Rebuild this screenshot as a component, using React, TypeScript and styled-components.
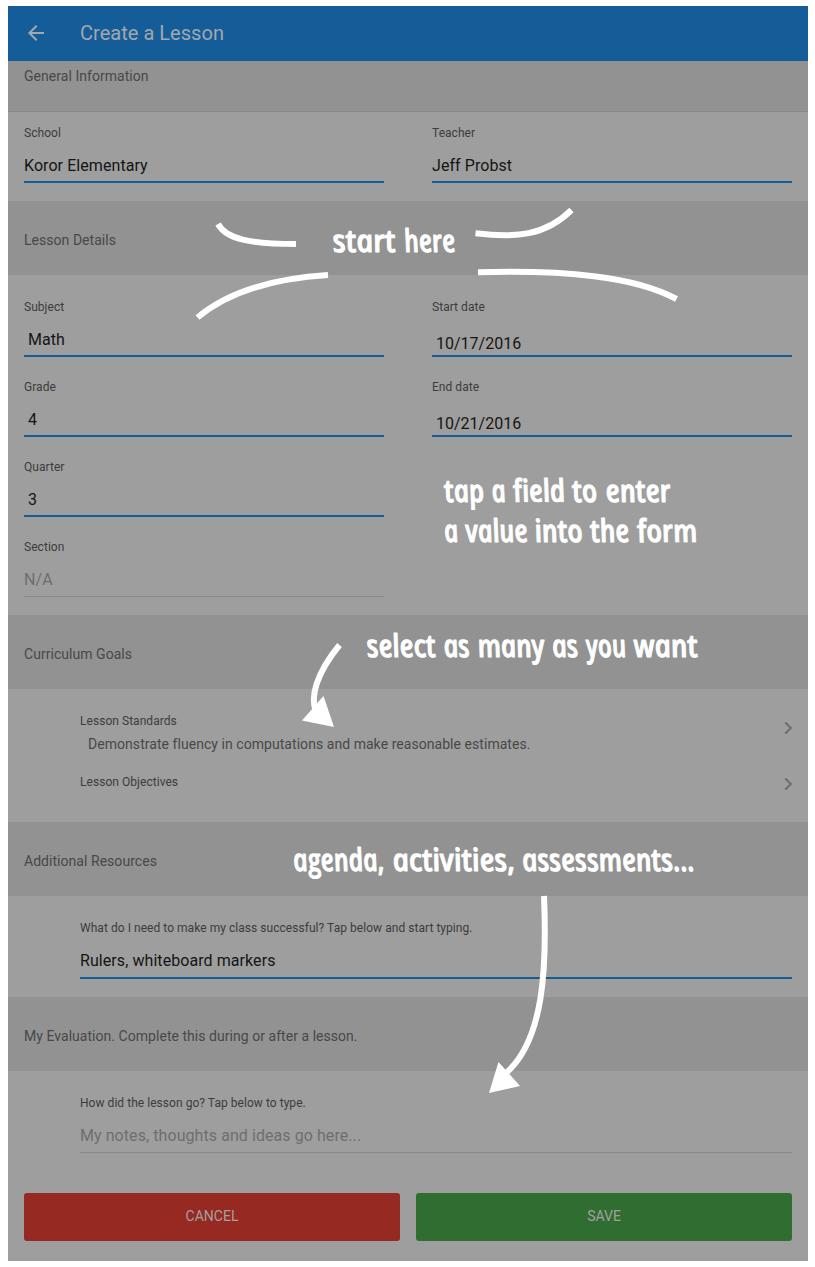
import React from "react";
import styled, { createGlobalStyle } from "styled-components";

const GlobalStyle = createGlobalStyle`
  * { box-sizing: border-box; }
  body { margin: 0; background: #fff; font-family: Roboto, "Liberation Sans", sans-serif; }
`;

const Page = styled.main`
  position: relative;
  width: 800px;
  height: 1255px;
  margin: 6px 0 6px 8px;
  background: #9e9e9e;
  overflow: hidden;
`;

const Toolbar = styled.header`
  display: flex;
  align-items: center;
  height: 55px;
  padding: 0 16px 1px;
  gap: 32px;
  background: #155d98;
  color: #a2a8ad;
`;

const Title = styled.h1`
  margin: 0;
  font-size: 20px;
  font-weight: 400;
  line-height: 24px;
  letter-spacing: 0.03px;
`;

const SectionBar = styled.h2<{ $first?: boolean }>`
  display: flex;
  align-items: center;
  height: ${(p) => (p.$first ? 51 : 74)}px;
  margin: 0;
  padding: ${(p) => (p.$first ? "0 16px 20px" : "4px 16px 0")};
  border-bottom: ${(p) => (p.$first ? "1px solid #8a8a8a" : "0")};
  background: #929292;
  color: #484848;
  font-size: 14px;
  font-weight: 400;
  letter-spacing: 0.04px;
`;

const Panel = styled.section<{ $height: number; $top: number; $inset?: boolean }>`
  height: ${(p) => p.$height}px;
  padding: ${(p) => p.$top}px 16px 0 ${(p) => (p.$inset ? 72 : 16)}px;
`;

const Columns = styled.div`
  display: grid;
  grid-template-columns: 1fr 1fr;
  column-gap: 48px;
`;

const FieldBox = styled.label`
  display: block;
  height: 80px;
`;

const FieldLabel = styled.span`
  display: block;
  height: 16px;
  font-size: 12px;
  line-height: 16px;
  letter-spacing: 0.045px;
  color: #3c3c3c;
`;

const FieldValue = styled.span<{ $empty?: boolean; $indent?: boolean; $drop?: boolean; $tall?: boolean }>`
  display: block;
  height: ${(p) => (p.$tall ? 43 : 42)}px;
  padding: ${(p) => (p.$drop ? 19 : 15)}px 0 0 ${(p) => (p.$indent ? 4 : 0)}px;
  border-bottom: ${(p) => (p.$empty ? "1px solid #898989" : "2px solid #155d98")};
  font-size: 16px;
  line-height: 20px;
  letter-spacing: ${(p) => (p.$indent ? 0 : 0.07)}px;
  color: ${(p) => (p.$empty ? "#6e6e6e" : "#151515")};
`;

const GoalRow = styled.div<{ $height: number }>`
  display: flex;
  justify-content: space-between;
  align-items: flex-start;
  height: ${(p) => p.$height}px;
`;

const GoalText = styled.p`
  margin: 5px 0 0 8px;
  font-size: 14px;
  line-height: 20px;
  letter-spacing: 0.05px;
  color: #484848;
`;

const Chevron = styled.svg<{ $offset: number }>`
  display: block;
  width: 8px;
  height: 14px;
  margin-top: ${(p) => p.$offset}px;
`;

const Actions = styled.footer`
  display: grid;
  grid-template-columns: 1fr 1fr;
  gap: 16px;
  padding: 0 16px;
`;

const Action = styled.button<{ $color: string }>`
  height: 48px;
  padding: 0 0 2px;
  border: 0;
  border-radius: 3px;
  background: ${(p) => p.$color};
  color: #a3a19f;
  font: 400 14px Roboto, "Liberation Sans", sans-serif;
`;

const Hints = styled.svg`
  position: absolute;
  inset: 0;
  width: 800px;
  height: 1255px;
  pointer-events: none;
`;

const Word = styled.text`
  font: italic 600 31.5px "Open Sans", "Noto Sans", sans-serif;
  font-variant-ligatures: none;
  fill: #fff;
  stroke: #fff;
  stroke-width: 1px;
  stroke-linejoin: round;
`;

type FieldProps = {
  label: string;
  value: string;
  empty?: boolean;
  indent?: boolean;
  drop?: boolean;
  tall?: boolean;
};

function Field({ label, value, empty, indent, drop, tall }: FieldProps) {
  return (
    <FieldBox>
      <FieldLabel>{label}</FieldLabel>
      <FieldValue $empty={empty} $indent={indent} $drop={drop} $tall={tall}>
        {value}
      </FieldValue>
    </FieldBox>
  );
}

function Next({ offset }: { offset: number }) {
  return (
    <Chevron viewBox="0 0 8 14" $offset={offset}>
      <path d="M1.2 1.4 6.8 7l-5.6 5.6" fill="none" stroke="#6c6c6c" strokeWidth="2" />
    </Chevron>
  );
}

// Each word: text, left edge, baseline, width.
const words: [string, number, number, number][] = [
  ["start", 334.5, 252, 63],
  ["here", 406, 252, 51],
  ["tap", 446, 501.5, 40],
  ["a", 493.5, 501.5, 14],
  ["field", 515, 501.5, 52],
  ["to", 574, 501.5, 25],
  ["enter", 607.5, 501.5, 65],
  ["a", 446, 542, 14],
  ["value", 467.500, 542, 62],
  ["into", 536.5, 542, 48],
  ["the", 592, 542, 39],
  ["form", 639, 542, 60],
  ["select", 368.5, 657, 69],
  ["as", 445.5, 657, 26],
  ["many", 479.5, 657, 67],
  ["as", 554, 657, 26],
  ["you", 588, 657, 40],
  ["want", 635.5, 657, 64],
  ["agenda,", 295, 871, 91],
  ["activities,", 394.5, 871, 122],
  ["assessments...", 524, 871, 172],
];

export default function App() {
  return (
    <>
      <GlobalStyle />
      <Page>
        <Toolbar>
          <svg width="24" height="24" viewBox="0 0 24 24">
            <path d="M20 11H7.83l5.59-5.59L12 4l-8 8 8 8 1.41-1.41L7.83 13H20z" fill="currentColor" />
          </svg>
          <Title>Create a Lesson</Title>
        </Toolbar>

        <SectionBar $first>General Information</SectionBar>
        <Panel $height={89} $top={13}>
          <Columns>
            <Field label="School" value="Koror Elementary" />
            <Field label="Teacher" value="Jeff Probst" />
          </Columns>
        </Panel>

        <SectionBar>Lesson Details</SectionBar>
        <Panel $height={340} $top={24}>
          <Columns>
            <div>
              <Field label="Subject" value="Math" indent />
              <Field label="Grade" value="4" indent />
              <Field label="Quarter" value="3" indent />
              <Field label="Section" value="N/A" empty />
            </div>
            <div>
              <Field label="Start date" value="10/17/2016" indent drop />
              <Field label="End date" value="10/21/2016" indent drop />
            </div>
          </Columns>
        </Panel>

        <SectionBar>Curriculum Goals</SectionBar>
        <Panel $height={133} $top={24} $inset>
          <GoalRow $height={61}>
            <div>
              <FieldLabel>Lesson Standards</FieldLabel>
              <GoalText>Demonstrate fluency in computations and make reasonable estimates.</GoalText>
            </div>
            <Next offset={8} />
          </GoalRow>
          <GoalRow $height={40}>
            <FieldLabel>Lesson Objectives</FieldLabel>
            <Next offset={3} />
          </GoalRow>
        </Panel>

        <SectionBar>Additional Resources</SectionBar>
        <Panel $height={101} $top={24} $inset>
          <Field
            label="What do I need to make my class successful? Tap below and start typing."
            value="Rulers, whiteboard markers"
            tall
          />
        </Panel>

        <SectionBar>My Evaluation. Complete this during or after a lesson.</SectionBar>
        <Panel $height={122} $top={24} $inset>
          <Field label="How did the lesson go? Tap below to type." value="My notes, thoughts and ideas go here..." empty />
        </Panel>

        <Actions>
          <Action $color="#962922">CANCEL</Action>
          <Action $color="#2f6d31">SAVE</Action>
        </Actions>

        <Hints viewBox="8 6 800 1255">
          <defs>
            {/* Trims the tail of the italic f at the baseline. */}
            <clipPath id="baseline">
              <rect x="-20" y="-40" width="220" height="40.8" />
            </clipPath>
          </defs>
          <g fill="none" stroke="#fff" strokeWidth="6">
            <path d="M218 224C226 239 250 244 296 244" />
            <path d="M197.500 317.500C228 292 272 278.500 328 275" />
            <path d="M475.500 233.300C516 238 545 236 571.500 210" />
            <path d="M478 272.300C565 270 634 276 676.500 299" />
            <path d="M339.500 645C316 674 310 697 316 712" />
            <path d="M544 896C547 967 544 1040 506 1073" />
          </g>
          <path d="M323.500 696 334 727 302 720.500Z M498.500 1062 520 1086 489 1093Z" fill="#fff" />
          {words.map(([text, x, y, width], i) => (
            <Word
              key={i}
              transform={`translate(${x} ${y}) skewX(12)`}
              textLength={width}
              lengthAdjust="spacingAndGlyphs"
              clipPath={text.startsWith("f") ? "url(#baseline)" : undefined}
            >
              {text}
            </Word>
          ))}
        </Hints>
      </Page>
    </>
  );
}
